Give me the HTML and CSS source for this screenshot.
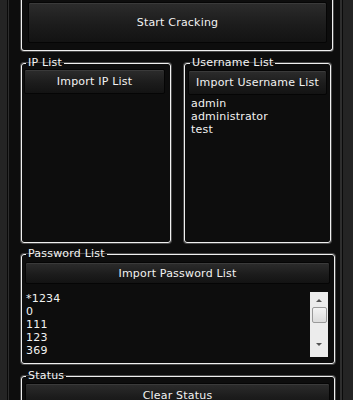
FILE: index.html
```html
<!DOCTYPE html>
<html>
<head>
<meta charset="utf-8">
<link rel="stylesheet" href="styles.css">
</head>
<body>
<div class="panel">
  <div class="top">
    <button class="btn big">Start Cracking</button>
  </div>
  <div class="row">
    <fieldset class="group ip">
      <legend>IP List</legend>
      <button class="btn ipbtn">Import IP List</button>
    </fieldset>
    <fieldset class="group user">
      <legend>Username List</legend>
      <button class="btn userbtn">Import Username List</button>
      <div class="list">admin<br>administrator<br>test</div>
    </fieldset>
  </div>
  <fieldset class="group pass">
    <legend>Password List</legend>
    <button class="btn passbtn">Import Password List</button>
    <div class="listbox">
      <div class="lines">*1234<br>0<br>111<br>123<br>369</div>
      <div class="scroll">
        <span class="arrow up"></span>
        <span class="thumb"></span>
        <span class="arrow down"></span>
      </div>
    </div>
  </fieldset>
  <fieldset class="group status">
    <legend>Status</legend>
    <button class="btn statusbtn">Clear Status</button>
  </fieldset>
</div>
</body>
</html>
```

FILE: styles.css
```css
* { box-sizing: border-box; }
html, body { margin: 0; padding: 0; }
body {
  background: #242424;
  font-family: "DejaVu Sans", Verdana, sans-serif;
  font-size: 11px;
  letter-spacing: 0.2px;
  color: #f2f2f2;
  height: 400px;
  overflow: hidden;
}
.panel {
  margin-left: 7px;
  width: 336px;
  height: 420px;
  background: #0d0d0d;
  border-left: 1px solid #0a0a0a;
  border-right: 1px solid #0a0a0a;
  box-shadow: inset 1px 0 #2e2e2e, inset -2px 0 #2e2e2e;
  padding-left: 13px;
}
.btn {
  display: block;
  font-family: "DejaVu Sans", Verdana, sans-serif;
  font-size: 11px;
  letter-spacing: 0.2px;
  color: #f2f2f2;
  background: linear-gradient(#2c2c2c, #1c1c1c 55%, #131313);
  border: 1px solid #050505;
  border-radius: 2px;
  box-shadow: inset 0 1px #3a3a3a;
  padding: 0;
  margin: 0;
}
.top {
  width: 312px;
  border: 1px solid #f0f0f0;
  border-top: none;
  border-radius: 0 0 3px 3px;
  box-shadow: 0 0 0 1px rgba(255,255,255,0.25);
  padding: 2px 0 7px 6px;
}
.big { width: 299px; height: 41px; }
.row {
  display: flex;
  gap: 13px;
  margin-top: 5px;
}
.group {
  margin: 0;
  min-width: 0;
  border: 1px solid #f0f0f0;
  border-radius: 3px;
  box-shadow: 0 0 0 1px rgba(255,255,255,0.25);
  padding: 0;
}
.group legend {
  padding: 0 2px;
  line-height: 14px;
  font-size: 11px;
  color: #f4f4f4;
}
.ip { width: 150px; height: 187px; padding-left: 2px; }
.ip legend { margin-left: 2px; }
.ipbtn { width: 141px; height: 25px; margin-top: -1px; }
.user { width: 147px; height: 187px; padding-left: 3px; }
.user legend { margin-left: 2px; }
.userbtn { width: 139px; height: 25px; }
.list {
  padding: 2px 0 0 3px;
  line-height: 13px;
}
.pass {
  width: 314px;
  height: 117px;
  margin-top: 4px;
  padding-left: 3px;
}
.pass legend { margin-left: 1px; }
.passbtn { width: 305px; height: 22px; margin-top: 1px; }
.listbox {
  display: flex;
  justify-content: space-between;
  align-items: flex-start;
  width: 305px;
  padding: 8px 1px 0 1px;
}
.lines { line-height: 13px; }
.scroll {
  width: 18px;
  height: 65px;
  margin-right: 1px;
  background: #ececec;
  display: flex;
  flex-direction: column;
  align-items: center;
}
.arrow {
  width: 0;
  height: 0;
  border-left: 3px solid transparent;
  border-right: 3px solid transparent;
}
.up { border-bottom: 3px solid #555; margin-top: 7px; }
.down { border-top: 3px solid #555; margin-top: 20px; }
.thumb {
  width: 15px;
  height: 16px;
  margin-top: 5px;
  border: 1px solid #9a9a9a;
  border-radius: 2px;
  background: linear-gradient(#f4f4f4, #dcdcdc);
}
.status {
  width: 314px;
  height: 60px;
  margin-top: 5px;
  padding-left: 3px;
}
.status legend { margin-left: 1px; }
.statusbtn { width: 305px; height: 25px; }
```
